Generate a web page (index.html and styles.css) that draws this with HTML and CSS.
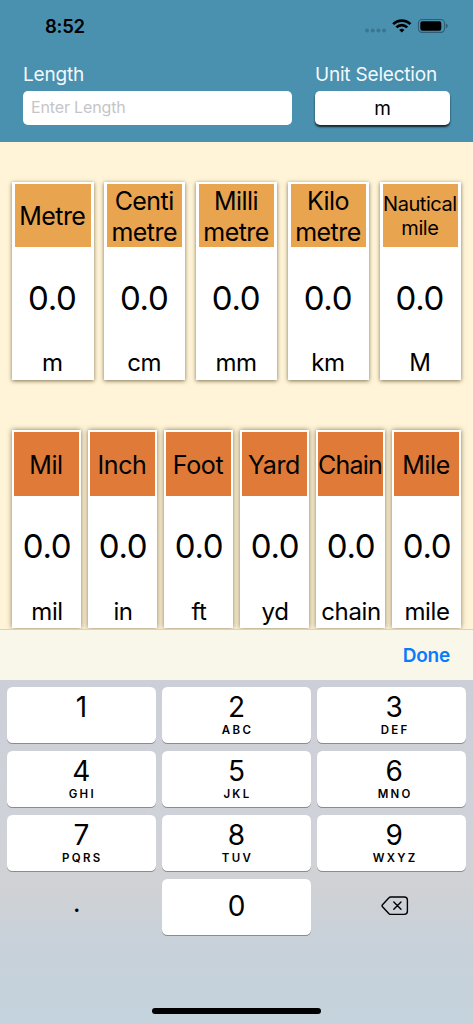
FILE: index.html
```html
<!DOCTYPE html>
<html lang="en">
<head>
<meta charset="utf-8">
<title>Length converter</title>
<link rel="stylesheet" href="styles.css">
</head>
<body>
<div class="screen">
  <header class="header">
    <div class="status">
      <span class="time">8:52</span>
      <svg class="status-icons" width="84" height="16" viewBox="0 0 84 16">
        <g fill="#397691"><circle cx="3" cy="12.5" r="2"/><circle cx="8.7" cy="12.5" r="2"/><circle cx="14.4" cy="12.5" r="2"/><circle cx="20" cy="12.5" r="2"/></g>
        <g fill="none" stroke="#000" stroke-width="2.7"><path d="M29.2 6.1a12.2 12.2 0 0 1 17.2 0"/><path d="M32.4 9.4a7.7 7.7 0 0 1 10.8 0"/></g>
        <path d="M37.8 14.6l-2.6-2.7a3.8 3.8 0 0 1 5.2 0z"/>
        <rect x="54.4" y="1.5" width="26.2" height="12.9" rx="3.8" fill="none" stroke="#2d5e75" stroke-width="1.1"/>
        <rect x="56.3" y="3.3" width="21" height="9.4" rx="2.2"/>
        <path d="M82 5.8q1.8.6 1.8 2.2t-1.8 2.2z" fill="#2d5e75"/>
      </svg>
    </div>
    <div class="form">
      <div class="field length"><span class="label">Length</span><div class="input">Enter Length</div></div>
      <div class="field unit"><span class="label">Unit Selection</span><div class="select">m</div></div>
    </div>
  </header>
  <main class="content">
    <section class="row metric">
      <article class="card"><h2 class="name">Metre</h2><div class="value">0.0</div><div class="symbol">m</div></article>
      <article class="card"><h2 class="name">Centi<br>metre</h2><div class="value">0.0</div><div class="symbol">cm</div></article>
      <article class="card"><h2 class="name">Milli<br>metre</h2><div class="value">0.0</div><div class="symbol">mm</div></article>
      <article class="card"><h2 class="name">Kilo<br>metre</h2><div class="value">0.0</div><div class="symbol">km</div></article>
      <article class="card"><h2 class="name small">Nautical<br>mile</h2><div class="value">0.0</div><div class="symbol">M</div></article>
    </section>
    <section class="row imperial">
      <article class="card"><h2 class="name">Mil</h2><div class="value">0.0</div><div class="symbol">mil</div></article>
      <article class="card"><h2 class="name">Inch</h2><div class="value">0.0</div><div class="symbol">in</div></article>
      <article class="card"><h2 class="name">Foot</h2><div class="value">0.0</div><div class="symbol">ft</div></article>
      <article class="card"><h2 class="name">Yard</h2><div class="value">0.0</div><div class="symbol">yd</div></article>
      <article class="card"><h2 class="name chain">Chain</h2><div class="value">0.0</div><div class="symbol">chain</div></article>
      <article class="card"><h2 class="name">Mile</h2><div class="value">0.0</div><div class="symbol">mile</div></article>
    </section>
  </main>
  <div class="toolbar"><span class="done">Done</span></div>
  <div class="keyboard">
    <div class="keys">
      <div class="key"><span class="digit">1</span></div>
      <div class="key"><span class="digit">2</span><span class="letters">ABC</span></div>
      <div class="key right"><span class="digit">3</span><span class="letters">DEF</span></div>
      <div class="key"><span class="digit">4</span><span class="letters">GHI</span></div>
      <div class="key"><span class="digit">5</span><span class="letters">JKL</span></div>
      <div class="key right"><span class="digit">6</span><span class="letters">MNO</span></div>
      <div class="key"><span class="digit">7</span><span class="letters">PQRS</span></div>
      <div class="key"><span class="digit">8</span><span class="letters">TUV</span></div>
      <div class="key right"><span class="digit">9</span><span class="letters">WXYZ</span></div>
      <div class="key plain point"><span class="digit">.</span></div>
      <div class="key zero"><span class="digit">0</span></div>
      <div class="key plain delete">
        <svg width="28" height="20" viewBox="0 0 28 20" fill="none" stroke="#000" stroke-width="1.4" stroke-linecap="round" stroke-linejoin="round">
          <path d="M9.6 1H23.3Q26.4 1 26.4 4.1V15.3Q26.4 18.4 23.3 18.4H9.6Q8.7 18.4 8 17.7L1.5 10.7Q.6 9.7 1.5 8.7L8 1.7Q8.7 1 9.6 1Z"/>
          <path d="M12.8 6.1l7.2 7.2M20 6.1l-7.2 7.2"/>
        </svg>
      </div>
    </div>
    <div class="home-bar"></div>
  </div>
</div>
</body>
</html>
```
FILE: styles.css
```css
* { box-sizing: border-box; }
body { margin: 0; }
.screen {
  width: 473px;
  height: 1024px;
  display: flex;
  flex-direction: column;
  overflow: hidden;
  background: #fff4d7;
  color: #000;
  font-family: Inter, "Liberation Sans", sans-serif;
}

.header { height: 142px; flex: none; background: #4a90af; }
.status {
  height: 62px;
  padding: 14px 25px 0 45px;
  display: flex;
  justify-content: space-between;
  align-items: flex-start;
}
.time { font-size: 18.5px; line-height: 24px; font-weight: 600; letter-spacing: -.3px; }
.status-icons { margin-top: 4px; }
.form { display: flex; justify-content: space-between; padding: 0 23px; }
.field { display: flex; flex-direction: column; }
.label { height: 29px; line-height: 25px; font-size: 19px; color: #f4f9fb; letter-spacing: -.2px; }
.length { width: 269px; }
.unit { width: 135px; }
.input, .select { height: 34px; background: #fff; border-radius: 5px; }
.input { padding-left: 8px; font-size: 16px; line-height: 33px; color: #c5c5c8; letter-spacing: -.15px; }
.select { font-size: 19px; line-height: 36px; text-align: center; box-shadow: 0 2px 2px rgba(0, 0, 0, .75); }

.content {
  height: 487px;
  flex: none;
  padding: 40px 12px 0;
  display: flex;
  flex-direction: column;
  gap: 50px;
  overflow: hidden;
}
.row { display: grid; height: 198px; flex: none; }
.metric { grid-template-columns: repeat(5, 81.6px); gap: 10.3px; }
.imperial { grid-template-columns: repeat(6, 69px); gap: 7px; }
.card {
  display: flex;
  flex-direction: column;
  background: #fff;
  padding: 2px 3px 0;
  text-align: center;
  white-space: nowrap;
  box-shadow: 0 1px 4px rgba(70, 58, 20, .7);
}
.imperial .card { padding: 2px 2px 0; box-shadow: 0 0 5px rgba(80, 66, 25, .7); }
.name {
  margin: 0;
  height: 63px;
  flex: none;
  display: flex;
  align-items: center;
  justify-content: center;
  background: #e9a44f;
  padding-top: 2px;
  padding-right: 1px;
  font-size: 25px;
  line-height: 31px;
  font-weight: 400;
  letter-spacing: -.55px;
}
.small { padding-top: 0; font-size: 20px; line-height: 24px; letter-spacing: -.45px; }
.imperial .name { height: 64px; background: #df7a39; letter-spacing: -.4px; }
.imperial .chain { letter-spacing: -.75px; }
.value { margin-top: 31px; padding-right: 1px; font-size: 33px; line-height: 40px; letter-spacing: -.3px; }
.imperial .value { margin-top: 30px; padding: 0 0 0 1px; }
.symbol { margin-top: 30px; padding-right: 1px; font-size: 24px; line-height: 30px; letter-spacing: -.4px; }
.imperial .symbol { margin-top: 31px; padding: 0 0 0 1px; }

.toolbar {
  height: 51px;
  flex: none;
  display: flex;
  align-items: center;
  justify-content: flex-end;
  padding: 0 23px;
  border-top: 1px solid #d8d3c0;
  background: #f9f6ea;
}
.done { color: #087cff; font-size: 19px; font-weight: 600; letter-spacing: -.2px; }

.keyboard {
  flex: 1;
  padding-top: 7px;
  display: flex;
  flex-direction: column;
  align-items: center;
  background: linear-gradient(#cccfd7 0, #d0d2da 140px, #d0d2d5 205px, #c9d1d9 255px, #c4d3dd 344px);
}
.keys {
  width: 459px;
  display: grid;
  grid-template-columns: repeat(3, 1fr);
  grid-auto-rows: 56px;
  gap: 8px 6.5px;
}
.key {
  display: flex;
  flex-direction: column;
  align-items: center;
  padding-top: 3px;
  background: #fff;
  border-radius: 5.5px;
  box-shadow: 0 1px 0 #898b90;
}
.right { padding-left: 5px; }
.digit { font-size: 28px; line-height: 34px; }
.letters { font-size: 11.5px; line-height: 13px; font-weight: 600; letter-spacing: 2.3px; padding-left: 2px; }
.plain { background: none; box-shadow: none; }
.zero { padding-top: 10px; }
.point { padding: 7px 0 0; }
.point .digit { font-size: 26px; padding-right: 9px; }
.delete { padding: 17px 0 0 7px; }
.home-bar { width: 169px; height: 6px; margin-top: 73px; border-radius: 3px; background: #000; }
```
